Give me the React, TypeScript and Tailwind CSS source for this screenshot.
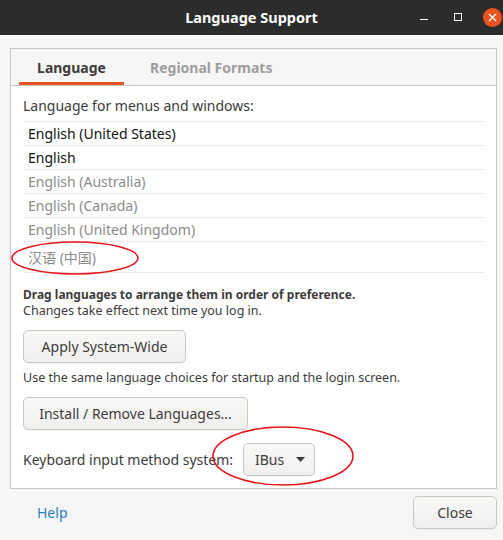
import React from "react";

const rows = [
  { label: "English (United States)", dim: false },
  { label: "English", dim: false },
  { label: "English (Australia)", dim: true },
  { label: "English (Canada)", dim: true },
  { label: "English (United Kingdom)", dim: true },
];

function GtkButton({ children, className = "" }: { children: React.ReactNode; className?: string }) {
  return (
    <div
      className={`h-[33px] flex items-center justify-center rounded-[5px] border border-[#cdc7c2] bg-gradient-to-b from-[#f8f8f7] to-[#f1f0ef] shadow-[0_1px_0_rgba(0,0,0,0.04)] text-[#3c3c3c] ${className}`}
    >
      {children}
    </div>
  );
}

export default function App() {
  return (
    <div
      className="relative w-[503px] h-[540px] overflow-hidden bg-[#f6f6f6] text-[14px] text-[#3c3c3c]"
      style={{ fontFamily: '"Noto Sans", "Noto Sans CJK SC", sans-serif' }}
    >
      {/* Header bar */}
      <div className="relative h-[35px] bg-[#2d2c2c] flex items-center justify-center">
        <span className="text-white font-bold text-[14.5px]">Language Support</span>
        <div className="absolute right-[1px] top-0 h-full flex items-center">
          <div className="w-[8px] h-[1px] bg-white mt-[3px]" />
          <div className="w-[8px] h-[8px] border border-white ml-[26px] mt-[-1px]" />
          <div className="w-[19px] h-[19px] ml-[21px] rounded-full bg-[#e95420] flex items-center justify-center">
            <svg width="9" height="9" viewBox="0 0 9 9">
              <path d="M1 1 L8 8 M8 1 L1 8" stroke="white" strokeWidth="1.4" />
            </svg>
          </div>
        </div>
      </div>

      {/* Notebook */}
      <div className="px-[10px] pt-[13px] pr-[6px]">
        <div className="border border-[#cdc7c2] bg-white">
          <div className="h-[37px] bg-[#f6f6f6] border-b border-[#cdc7c2] flex items-stretch pl-[8px]">
            <div className="w-[105px] flex items-center justify-center font-bold text-[#3c3c3c] border-b-[3px] border-[#e95420] pt-[3px]">
              Language
            </div>
            <div className="flex items-center pl-[26px] font-bold text-[#9e9e9e]">
              Regional Formats
            </div>
          </div>

          <div className="px-[12px] pt-[10px] pb-[12px]">
            <div className="leading-[20px]">Language for menus and windows:</div>
            <div className="mt-[5px] ml-[1px] border-b border-[#ebebeb]">
              {rows.map((r) => (
                <div
                  key={r.label}
                  className={`h-[24px] border-t border-[#ebebeb] flex items-center pl-[4px] ${
                    r.dim ? "text-[#8b8b8b]" : "text-[#111111]"
                  }`}
                >
                  {r.label}
                </div>
              ))}
              <div className="h-[31px] border-t border-[#ebebeb] flex items-center pl-[4px] pt-[1px] text-[#8b8b8b]">
                汉语 (中国)
              </div>
            </div>

            <div className="mt-[14px] font-bold text-[12px] leading-[16px]">
              Drag languages to arrange them in order of preference.
            </div>
            <div className="text-[12.5px] leading-[16px]">Changes take effect next time you log in.</div>

            <GtkButton className="w-[163px] mt-[11px]">Apply System-Wide</GtkButton>

            <div className="mt-[7px] text-[12.5px] leading-[16px]">
              Use the same language choices for startup and the login screen.
            </div>

            <GtkButton className="w-[225px] mt-[11px]">Install / Remove Languages...</GtkButton>

            <div className="mt-[13px] flex items-center gap-[10px]">
              <span>Keyboard input method system:</span>
              <GtkButton className="w-[72px] gap-[12px] pl-[2px]">
                <span>IBus</span>
                <svg width="9" height="5" viewBox="0 0 9 5">
                  <path d="M0 0 H9 L4.5 5 Z" fill="#3c3c3c" />
                </svg>
              </GtkButton>
            </div>
          </div>
        </div>
      </div>

      {/* Footer */}
      <div className="flex items-center justify-between pl-[37px] pr-[6px] pt-[7px]">
        <span className="text-[#2a7fc0]">Help</span>
        <GtkButton className="w-[84px]">Close</GtkButton>
      </div>

      {/* Red annotation ellipses */}
      <svg className="absolute left-0 top-0 pointer-events-none" width="503" height="540">
        <ellipse cx="75" cy="258" rx="63" ry="16" fill="none" stroke="#e8141a" strokeWidth="1.6" />
        <ellipse cx="283" cy="456" rx="70" ry="29" fill="none" stroke="#e8141a" strokeWidth="1.6" />
      </svg>
    </div>
  );
}
